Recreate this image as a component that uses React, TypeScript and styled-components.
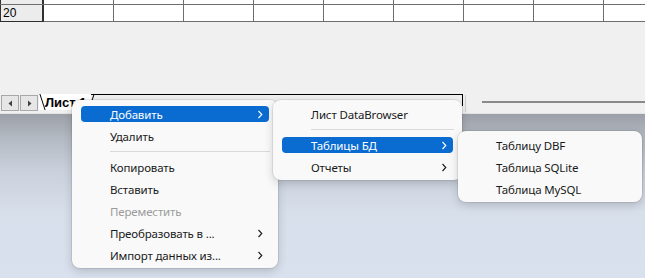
import React from 'react'
import styled, { createGlobalStyle } from 'styled-components'

const GlobalStyle = createGlobalStyle`
  html, body {
    margin: 0;
    padding: 0;
    background: #f0f0f0;
  }
  body {
    font-family: 'Liberation Sans', Arial, sans-serif;
  }
`

const COLS = 9

const Chevron = () => (
  <svg width="6" height="9" viewBox="0 0 6 9">
    <path d="M1.5 1 L4.8 4.5 L1.5 8" fill="none" stroke="currentColor" strokeWidth="1.1" />
  </svg>
)

const Triangle = ({ dir }: { dir: 'left' | 'right' }) => (
  <svg width="5" height="7" viewBox="0 0 5 7">
    {dir === 'left' ? <path d="M4 0.5 L0.5 3.5 L4 6.5 Z" fill="#404040" /> : <path d="M1 0.5 L4.5 3.5 L1 6.5 Z" fill="#404040" />}
  </svg>
)

type Item = { label: string; sub?: boolean; active?: boolean; disabled?: boolean } | 'sep'

const mainMenu: Item[] = [
  { label: 'Добавить', sub: true, active: true },
  { label: 'Удалить' },
  'sep',
  { label: 'Копировать' },
  { label: 'Вставить' },
  { label: 'Переместить', disabled: true },
  { label: 'Преобразовать в ...', sub: true },
  { label: 'Импорт данных из...', sub: true },
]

const addMenu: Item[] = [
  { label: 'Лист DataBrowser' },
  'sep',
  { label: 'Таблицы БД', sub: true, active: true },
  { label: 'Отчеты', sub: true },
]

const dbMenu: Item[] = [
  { label: 'Таблицу DBF' },
  { label: 'Таблица SQLite' },
  { label: 'Таблица MySQL' },
]

const MenuList = ({ items, x, y, w }: { items: Item[]; x: number; y: number; w: number }) => (
  <Menu $x={x} $y={y} $w={w}>
    {items.map((it, i) =>
      it === 'sep' ? (
        <Separator key={i} />
      ) : (
        <MenuItem key={i} $active={it.active} $disabled={it.disabled}>
          <span>{it.label}</span>
          {it.sub && (
            <Arrow>
              <Chevron />
            </Arrow>
          )}
        </MenuItem>
      )
    )}
  </Menu>
)

const App = () => {
  return (
    <Screen>
      <GlobalStyle />
      <Window>
        <Sheet>
          <GridRow $h={4}>
            <HeadCell />
            {Array.from({ length: COLS }).map((_, i) => (
              <Cell key={i} />
            ))}
          </GridRow>
          <GridRow $h={16}>
            <HeadCell>20</HeadCell>
            {Array.from({ length: COLS }).map((_, i) => (
              <Cell key={i} />
            ))}
          </GridRow>
        </Sheet>
        <TabBar>
          <NavGroup>
            <NavButton>
              <Triangle dir="left" />
            </NavButton>
            <NavButton>
              <Triangle dir="right" />
            </NavButton>
          </NavGroup>
          <SheetTab>Лист 1</SheetTab>
          <TabStrip />
          <ScrollArea>
            <ScrollLine />
          </ScrollArea>
        </TabBar>
      </Window>
      <Desktop />
      <MenuList items={mainMenu} x={72} y={100} w={206} />
      <MenuList items={addMenu} x={273} y={100} w={189} />
      <MenuList items={dbMenu} x={458} y={131} w={184} />
    </Screen>
  )
}

export default App

const Screen = styled.div`
  position: relative;
  width: 645px;
  height: 278px;
  overflow: hidden;
  display: flex;
  flex-direction: column;
`

const Window = styled.div`
  height: 114px;
  background: #f0f0f0;
  display: flex;
  flex-direction: column;
  justify-content: space-between;
  border-bottom: 1px solid #e4e4e4;
  box-sizing: border-box;
`

const Sheet = styled.div`
  display: flex;
  flex-direction: column;
`

const GridRow = styled.div<{ $h: number }>`
  display: flex;
  height: ${p => p.$h}px;
  border-bottom: 1px solid #6e6e6e;
`

const HeadCell = styled.div`
  width: 39px;
  flex: 0 0 39px;
  background: #ececec;
  border-left: 1px solid #303030;
  border-right: 2px solid #303030;
  font-size: 12px;
  line-height: 16px;
  padding-left: 2px;
  color: #000;
  box-sizing: content-box;
  overflow: hidden;
  ${GridRow}:last-child & {
    border-bottom: 1px solid #303030;
    margin-bottom: -1px;
  }
`

const Cell = styled.div`
  width: 69px;
  flex: 0 0 69px;
  background: #fff;
  border-right: 1px solid #6e6e6e;
`

const TabBar = styled.div`
  display: flex;
  align-items: flex-start;
  height: 19px;
  padding-top: 1px;
  box-sizing: border-box;
`

const NavGroup = styled.div`
  display: flex;
  gap: 1px;
  padding-left: 1px;
`

const NavButton = styled.div`
  width: 16px;
  height: 14px;
  background: #e6e6e6;
  border: 1px solid #a8a8a8;
  display: flex;
  align-items: center;
  justify-content: center;
`

const SheetTab = styled.div`
  position: relative;
  width: 52px;
  height: 16px;
  margin-left: 1px;
  margin-top: -1px;
  padding-left: 6px;
  box-sizing: border-box;
  background: #fff;
  font-size: 13px;
  font-weight: bold;
  line-height: 17px;
  color: #000;
  &::before,
  &::after {
    content: '';
    position: absolute;
    top: 0;
    bottom: 0;
    width: 1px;
    background: #000;
  }
  &::before {
    left: 3px;
    transform: skewX(18deg);
  }
  &::after {
    right: -1px;
    transform: skewX(-18deg);
  }
`

const TabStrip = styled.div`
  width: 372px;
  height: 12px;
  margin-top: -1px;
  border-top: 1px solid #000;
  border-right: 1px solid #000;
  box-sizing: border-box;
`

const ScrollArea = styled.div`
  flex: 1;
  height: 17px;
  margin-left: 2px;
  border-left: 1px solid #d0d0d0;
  padding: 6px 0 0 16px;
  box-sizing: border-box;
`

const ScrollLine = styled.div`
  height: 2px;
  background: #8a8a8a;
`

const Desktop = styled.div`
  flex: 1;
  background: linear-gradient(180deg, #9ca0a8 0%, #b4bac3 15%, #cad1dc 35%, #d7dfeb 60%, #d9e1ee 100%);
`

const Menu = styled.div<{ $x: number; $y: number; $w: number }>`
  position: absolute;
  left: ${p => p.$x}px;
  top: ${p => p.$y}px;
  width: ${p => p.$w}px;
  box-sizing: border-box;
  padding: 3px 9px 2px;
  display: flex;
  flex-direction: column;
  background: #f9f9f9;
  border-radius: 8px;
  box-shadow: 0 0 0 1px rgba(0, 0, 0, 0.07), 0 3px 10px rgba(0, 0, 0, 0.18);
  font-family: 'Noto Sans', 'Open Sans', sans-serif;
  font-size: 11.5px;
  letter-spacing: -0.15px;
`

const MenuItem = styled.div<{ $active?: boolean; $disabled?: boolean }>`
  height: 16px;
  margin: 3px 0;
  padding: 0 6px 0 29px;
  display: flex;
  align-items: center;
  justify-content: space-between;
  border-radius: 4px;
  white-space: nowrap;
  background: ${p => (p.$active ? '#0a6cd1' : 'transparent')};
  color: ${p => (p.$active ? '#fff' : p.$disabled ? '#9b9b9b' : '#1a1a1a')};
`

const Arrow = styled.span`
  display: flex;
  align-items: center;
`

const Separator = styled.div`
  height: 1px;
  margin: 4px -1px 4px 29px;
  background: #dadada;
`
